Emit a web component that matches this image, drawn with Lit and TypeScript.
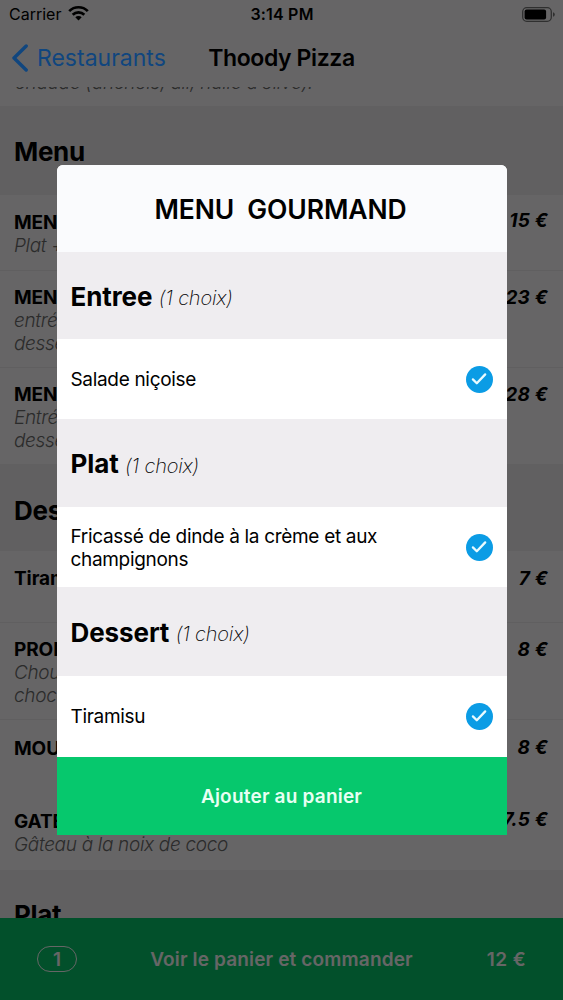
import { LitElement, html, css, nothing } from "lit";
import { customElement, property } from "lit/decorators.js";

interface Dish { name: string; desc?: string[]; price: string; height: number; drop?: number; lift?: number; }
interface Course { title: string; label: string; choice: string[]; height: number; body: number; }

const menus: Dish[] = [
  { name: "MENU DU JOUR", desc: ["Plat + dessert"], price: "15 €", height: 76, drop: 1, lift: 2 },
  { name: "MENU GOURMAND", desc: ["entrée, plat et", "dessert au choix"], price: "23 €", height: 97 },
  { name: "MENU THOODY", desc: ["Entrée, plat et", "dessert, boisson"], price: "28 €", height: 96 },
];

const desserts: Dish[] = [
  { name: "Tiramisu", price: "7 €", height: 72, drop: 1 },
  { name: "PROFITEROLES", desc: ["Choux, glace et", "chocolat chaud"], price: "8 €", height: 97 },
  { name: "MOUSSE", price: "8 €", height: 73, drop: 2, lift: 1 },
  { name: "GATEAU COCO", desc: ["Gâteau à la noix de coco"], price: "7.5 €", height: 77, drop: 2, lift: 2 },
];

const courses: Course[] = [
  { title: "Entree", label: "(1 choix)", choice: ["Salade niçoise"], height: 87, body: 80 },
  { title: "Plat", label: "(1 choix)", choice: ["Fricassé de dinde à la crème et aux", "champignons"], height: 88, body: 80 },
  { title: "Dessert", label: "(1 choix)", choice: ["Tiramisu"], height: 89, body: 81 },
];

@customElement("dish-row")
class DishRow extends LitElement {
  @property({ attribute: false }) dish!: Dish;
  static styles = css`
    :host { display: block; box-sizing: border-box; border-bottom: 1px solid #f0edf0; }
    :host([last]) { border-bottom-color: transparent; }
    .row { display: flex; justify-content: space-between; padding: 0 15px 0 14px; }
    .name { font-weight: 700; letter-spacing: -0.1px; }
    .desc { font-style: italic; font-weight: 350; color: #6c6c6c; letter-spacing: -0.32px; }
    .price { font-style: italic; font-weight: 700; white-space: nowrap; letter-spacing: 0.2px; }
  `;
  render() {
    const d = this.dish;
    return html`
      <div class="row" style="padding-top:${15 + (d.drop ?? 0)}px">
        <div>
          <div class="name">${d.name}</div>
          ${d.desc?.map((t) => html`<div class="desc">${t}</div>`) ?? nothing}
        </div>
        <div class="price" style="margin-top:${-(d.lift ?? 0)}px">${d.price}</div>
      </div>`;
  }
}

@customElement("menu-dialog")
class MenuDialog extends LitElement {
  static styles = css`
    :host { display: block; background: #fff; border-radius: 6px 6px 0 0; overflow: hidden; color: #000; }
    .title { height: 87px; box-sizing: border-box; padding: 2px 2px 0 0; display: flex; align-items: center; justify-content: center; background: #fafbfd; font-size: 26.5px; font-weight: 600; white-space: pre; letter-spacing: -0.1px; }
    .head { display: flex; align-items: center; box-sizing: border-box; padding: 1px 14px 0; background: #efedf0; }
    .head b { font-size: 26px; font-weight: 700; letter-spacing: -0.1px; }
    .head i { font-size: 20px; font-weight: 200; letter-spacing: -0.2px; margin: 5px 0 0 6.5px; }
    .row { display: flex; align-items: center; justify-content: space-between; padding: 0 14px; }
    .choice { letter-spacing: -0.32px; }
    .choice div:first-child:not(:last-child) { margin-top: 2px; }
    .button { height: 78px; display: flex; align-items: center; justify-content: center; background: #06c86d; color: #e8fff3; font-weight: 600; letter-spacing: 0.2px; }
    svg { display: block; width: 27px; height: 27px; }
  `;
  render() {
    return html`
      <div class="title">MENU  GOURMAND</div>
      ${courses.map((c) => html`
        <div class="head" style="height:${c.height}px"><b>${c.title}</b><i>${c.label}</i></div>
        <div class="row" style="height:${c.body}px">
          <div class="choice">${c.choice.map((l) => html`<div>${l}</div>`)}</div>
          <svg viewBox="0 0 27 27"><circle cx="13.5" cy="13.5" r="13.5" fill="#0b9ce5"/><path d="M6.9 13.4l3.9 3.9L19.2 8.4" fill="none" stroke="#e9fbff" stroke-width="2.3" stroke-linecap="round" stroke-linejoin="round"/></svg>
        </div>`)}
      <div class="button">Ajouter au panier</div>`;
  }
}

@customElement("app-root")
class AppRoot extends LitElement {
  static styles = css`
    :host { display: flex; flex-direction: column; position: relative; width: 563px; height: 1000px; overflow: hidden; background: #fffdff; color: #000; font: 19px/23px Inter, "Liberation Sans", sans-serif; }
    .status { height: 29px; flex: none; display: grid; grid-template-columns: 1fr auto 1fr; align-items: center; padding: 0 8px 0 9px; font-size: 16px; }
    .carrier { display: flex; align-items: center; gap: 7px; }
    .wifi { width: 21px; height: 16px; margin-top: -3px; }
    .time { font-weight: 600; letter-spacing: 0.2px; }
    .battery { justify-self: end; width: 33px; height: 15px; }
    .nav { height: 58px; flex: none; display: grid; grid-template-columns: 1fr auto 1fr; align-items: center; padding: 0 11px; box-sizing: border-box; font-size: 23px; }
    .back { display: flex; align-items: center; gap: 9px; color: #10467f; position: relative; z-index: 1; }
    .back svg { width: 17px; height: 28px; }
    .heading { font-weight: 600; letter-spacing: -0.4px; }
    .list { flex: 1; min-height: 0; overflow: hidden; display: flex; flex-direction: column; }
    .clip { height: 19px; flex: none; overflow: hidden; display: flex; align-items: flex-start; padding-left: 15px; font-style: italic; font-weight: 300; color: #6c6c6c; letter-spacing: -0.22px; }
    .clip span { margin-top: -16px; }
    .section { flex: none; box-sizing: border-box; height: 89px; padding: 30px 14px 0; background: #f3f0f3; font-size: 26px; line-height: 32px; font-weight: 700; letter-spacing: -0.3px; }
    .short { height: 87px; padding-top: 31px; }
    .final { padding-top: 29px; }
    dish-row { flex: none; }
    .cart { height: 82px; flex: none; display: grid; grid-template-columns: 1fr auto 1fr; align-items: center; box-sizing: border-box; padding: 0 37px; background: #05c76c; color: #fff; font-weight: 600; letter-spacing: 0.15px; }
    .count { width: 40px; height: 26px; box-sizing: border-box; border: 1.5px solid #fff; border-radius: 13px; display: flex; align-items: center; justify-content: center; }
    .total { justify-self: end; letter-spacing: 0.4px; }
    .shade { position: absolute; inset: 0; background: rgba(0, 0, 0, 0.6); }
    menu-dialog { position: absolute; left: 56.5px; top: 165px; width: 450px; }
  `;
  row(d: Dish, last: boolean) {
    return html`<dish-row .dish=${d} ?last=${last} style="height:${d.height}px"></dish-row>`;
  }
  render() {
    return html`
      <div class="status">
        <div class="carrier"><span>Carrier</span>
          <svg class="wifi" viewBox="0 0 21 16"><g fill="none" stroke="#000" stroke-width="2.7"><path d="M1.2 6.1a13.2 13.2 0 0 1 18.6 0"/><path d="M4.7 9.8a8.2 8.2 0 0 1 11.6 0"/></g><path d="M7.3 12.2a4.6 4.6 0 0 1 6.4 0L10.5 15.6z"/></svg>
        </div>
        <div class="time">3:14 PM</div>
        <svg class="battery" viewBox="0 0 33 15"><rect x=".7" y=".7" width="28.6" height="13.6" rx="4" fill="none" stroke="#777" stroke-width="1.3"/><rect x="2.6" y="2.6" width="21.5" height="9.8" rx="2"/><path d="M31 5.2q1.8 .6 1.8 2.3t-1.8 2.3z" fill="#777"/></svg>
      </div>
      <div class="nav">
        <div class="back"><svg viewBox="0 0 17 28"><path d="M15.2 2L3 14l12.2 12" fill="none" stroke="#10467f" stroke-width="3.4" stroke-linecap="round" stroke-linejoin="round"/></svg><span>Restaurants</span></div>
        <div class="heading">Thoody Pizza</div>
      </div>
      <div class="list">
        <div class="clip"><span>chaude (anchois, ail, huile d’olive).</span></div>
        <div class="section">Menu</div>
        ${menus.map((d, i) => this.row(d, i === menus.length - 1))}
        <div class="section short">Desserts</div>
        ${desserts.map((d, i) => this.row(d, i >= 2))}
        <div class="section short final">Plat</div>
      </div>
      <div class="cart"><div class="count">1</div><div>Voir le panier et commander</div><div class="total">12 €</div></div>
      <div class="shade"></div>
      <menu-dialog></menu-dialog>`;
  }
}
